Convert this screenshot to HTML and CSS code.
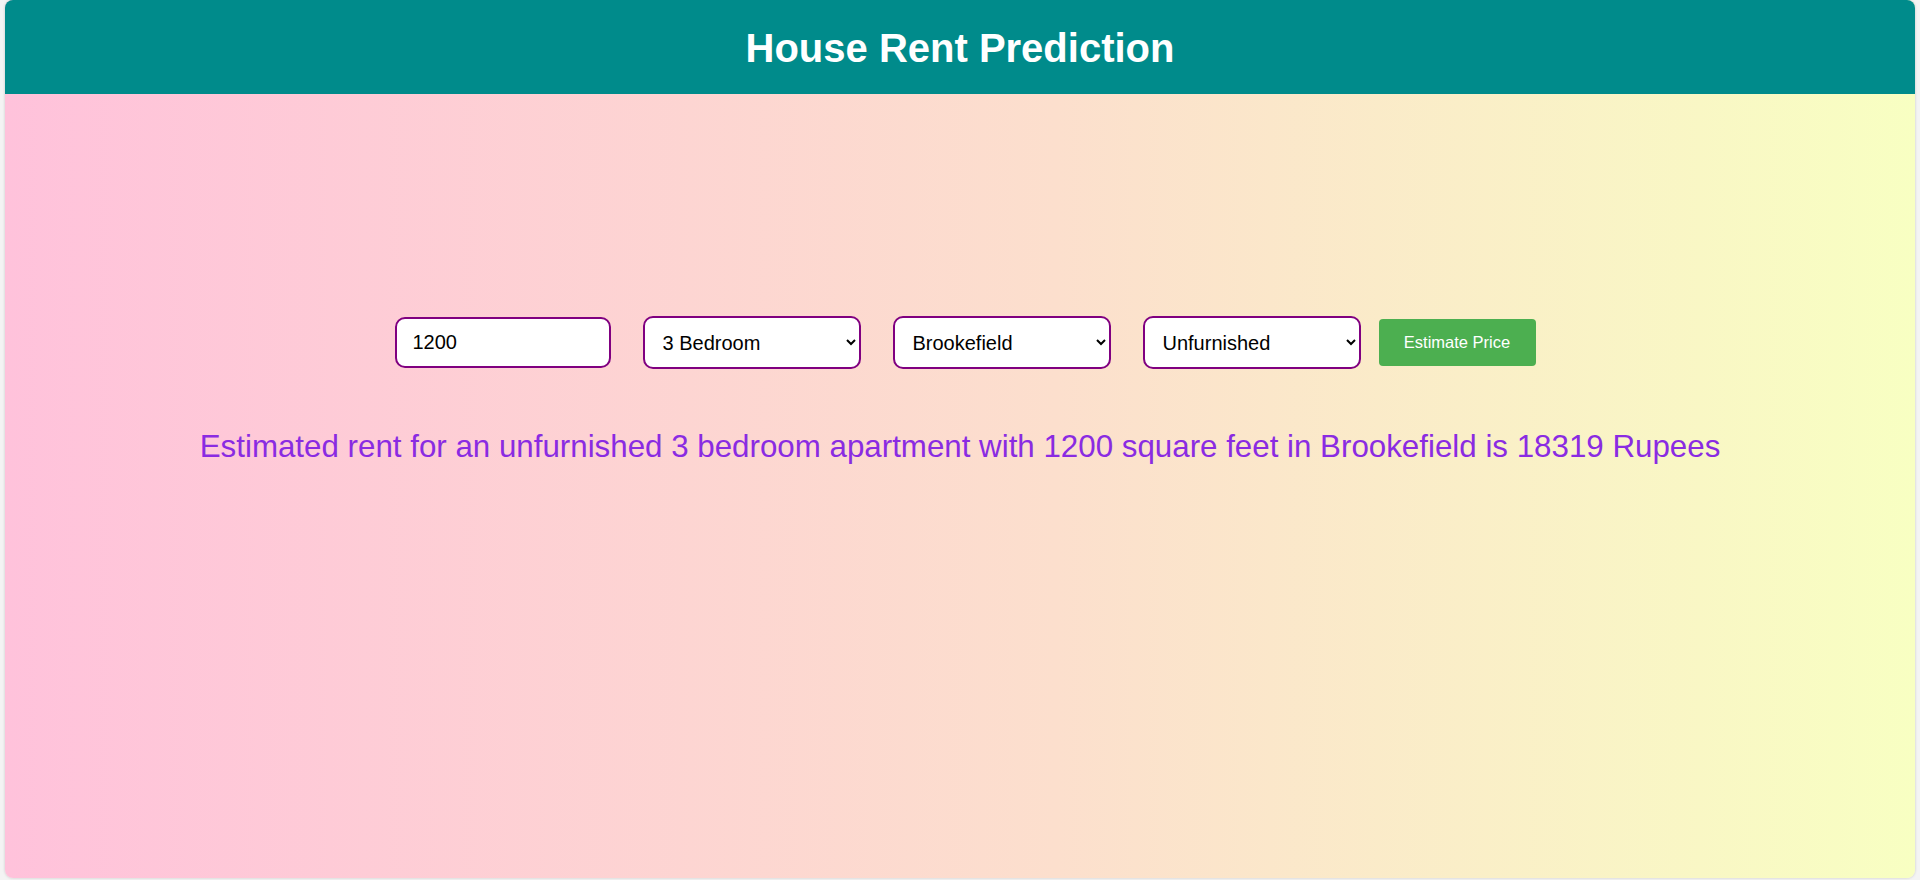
FILE: index.html
```html
<!DOCTYPE html>
<html lang="en">
<head>
<meta charset="utf-8">
<title>House Rent Prediction</title>
<link rel="stylesheet" href="styles.css">
</head>
<body>
<div class="card">
  <header class="header">
    <h1 class="title">House Rent Prediction</h1>
  </header>
  <main class="content">
    <form class="form-row">
      <input class="field field-input" type="text" value="1200">
      <select class="field field-select">
        <option>3 Bedroom</option>
      </select>
      <select class="field field-select">
        <option>Brookefield</option>
      </select>
      <select class="field field-select field-last">
        <option>Unfurnished</option>
      </select>
      <button class="btn" type="button">Estimate Price</button>
    </form>
    <p class="result">Estimated rent for an unfurnished 3 bedroom apartment with 1200 square feet in Brookefield is 18319 Rupees</p>
  </main>
</div>
</body>
</html>
```
FILE: styles.css
```css
html, body {
  margin: 0;
  padding: 0;
  height: 100%;
}
body {
  background: #f4f4f4;
  font-family: "Liberation Sans", Arial, sans-serif;
  padding: 0 5px 1px;
  box-sizing: border-box;
}
.card {
  height: 878px;
  border-radius: 8px;
  overflow: hidden;
  box-shadow: 0 0 3px rgba(0, 0, 0, 0.18);
  background: linear-gradient(to right, #ffc2db 0%, #fcdfcd 55%, #f8ffc2 100%);
  display: flex;
  flex-direction: column;
}
.header {
  height: 94px;
  flex: none;
  background: #008b8b;
  display: flex;
  align-items: center;
  justify-content: center;
}
.title {
  margin: 0;
  color: #ffffff;
  font-size: 40px;
  font-weight: bold;
  padding-top: 2px;
}
.content {
  padding-top: 222px;
  display: flex;
  flex-direction: column;
  align-items: center;
}
.form-row {
  display: flex;
  align-items: center;
  justify-content: center;
}
.field {
  box-sizing: border-box;
  margin: 0 16px;
  border: 2px solid #800080;
  border-radius: 10px;
  background: #ffffff;
  color: #000000;
  font-family: "Liberation Sans", Arial, sans-serif;
  font-size: 20px;
}
.field-input {
  width: 216px;
  height: 51px;
  padding: 0 15px 0 16px;
  outline: none;
}
.field-select {
  width: 218px;
  height: 53px;
  padding: 0 4px 0 14px;
}
.field-last {
  margin-right: 2px;
}
.btn {
  width: 157px;
  height: 47px;
  margin-left: 16px;
  margin-right: 6px;
  border: none;
  border-radius: 4px;
  background: #4caf50;
  color: #ffffff;
  font-family: "Liberation Sans", Arial, sans-serif;
  font-size: 16.5px;
  padding: 0;
}
.result {
  margin: 60px 0 0;
  color: #8a2be2;
  font-size: 31.3px;
  text-align: center;
}
```
